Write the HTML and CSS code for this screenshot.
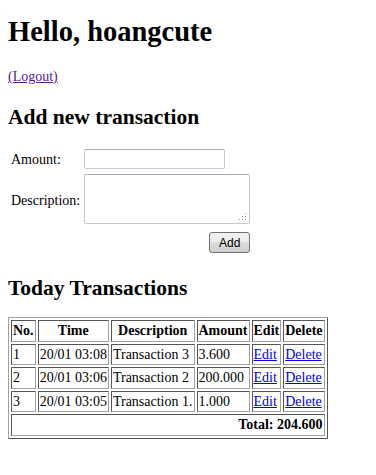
FILE: index.html
```html
<!DOCTYPE html>
<html lang="en">
<head>
  <meta charset="UTF-8">
  <title>Transactions</title>
  <link rel="stylesheet" href="styles.css">
</head>
<body>
  <h1>Hello, hoangcute</h1>
  <a href="#" class="logout">(Logout)</a>

  <h2>Add new transaction</h2>
  <form class="add-form">
    <table class="form-table">
      <tr>
        <td class="lbl">Amount:</td>
        <td><input type="text" class="amount"></td>
      </tr>
      <tr>
        <td class="lbl">Description:</td>
        <td><textarea class="desc"></textarea></td>
      </tr>
      <tr>
        <td></td>
        <td class="actions"><button type="button" class="add-btn">Add</button></td>
      </tr>
    </table>
  </form>

  <h2>Today Transactions</h2>
  <table class="trans">
    <thead>
      <tr>
        <th>No.</th>
        <th>Time</th>
        <th>Description</th>
        <th>Amount</th>
        <th>Edit</th>
        <th>Delete</th>
      </tr>
    </thead>
    <tbody>
      <tr>
        <td>1</td>
        <td>20/01 03:08</td>
        <td>Transaction 3</td>
        <td>3.600</td>
        <td><a href="#">Edit</a></td>
        <td><a href="#">Delete</a></td>
      </tr>
      <tr>
        <td>2</td>
        <td>20/01 03:06</td>
        <td>Transaction 2</td>
        <td>200.000</td>
        <td><a href="#">Edit</a></td>
        <td><a href="#">Delete</a></td>
      </tr>
      <tr>
        <td>3</td>
        <td>20/01 03:05</td>
        <td>Transaction 1.</td>
        <td>1.000</td>
        <td><a href="#">Edit</a></td>
        <td><a href="#">Delete</a></td>
      </tr>
      <tr>
        <td colspan="6" class="total">Total: 204.600</td>
      </tr>
    </tbody>
  </table>
</body>
</html>
```

FILE: styles.css
```css
body { font-family: "Liberation Serif", "Times New Roman", serif; font-size: 14px; margin: 8px; color: #000; background: #fff; }
h1 { font-size: 28.5px; margin: 8px 0 21px; }
h2 { font-size: 21.5px; margin: 20px 0 16px; }
a { color: #0000ee; }
.logout { color: #551a8b; }

.form-table { border-spacing: 2px; margin-top: 1px; }
.form-table td { padding: 1px; }
.lbl { padding-right: 4px; }
.amount { width: 135px; height: 16px; margin-bottom: 1px; border: 1px solid #c3c9d2; border-top-color: #a9adb4; padding: 1px 2px; border-radius: 2px; }
.desc { width: 160px; height: 44px; border: 1px solid #c3c9d2; border-top-color: #a9adb4; padding: 2px; resize: none; border-radius: 2px; font-family: inherit;
  background: radial-gradient(circle, #a0a0a0 0.6px, transparent 0.8px) right 2px bottom 2px / 3px 3px no-repeat,
    radial-gradient(circle, #a0a0a0 0.6px, transparent 0.8px) right 5px bottom 2px / 3px 3px no-repeat,
    radial-gradient(circle, #a0a0a0 0.6px, transparent 0.8px) right 2px bottom 5px / 3px 3px no-repeat,
    radial-gradient(circle, #a0a0a0 0.6px, transparent 0.8px) right 8px bottom 2px / 3px 3px no-repeat,
    radial-gradient(circle, #a0a0a0 0.6px, transparent 0.8px) right 5px bottom 5px / 3px 3px no-repeat,
    radial-gradient(circle, #a0a0a0 0.6px, transparent 0.8px) right 2px bottom 8px / 3px 3px no-repeat,
    #fff; }
.actions { text-align: right; padding-top: 2px; }
.add-btn { font-family: "Liberation Sans", Arial, sans-serif; font-size: 12px; padding: 2px 6px; width: 41px; height: 21px; border: 1px solid #707070; border-radius: 3px; background: linear-gradient(#f2f2f2, #ebebeb 50%, #dddddd 50%, #cfcfcf); color: #000; }

.trans { border: 1px solid; border-color: #a0a0a0 #555 #555 #a0a0a0; border-spacing: 2px; }
.trans th, .trans td { border: 1px solid; border-color: #555 #a0a0a0 #a0a0a0 #555; padding: 1px; line-height: 17.6px; }
.trans th { font-weight: bold; text-align: center; }
.trans td { text-align: left; }
.trans td.total { text-align: right; font-weight: bold; }
```
